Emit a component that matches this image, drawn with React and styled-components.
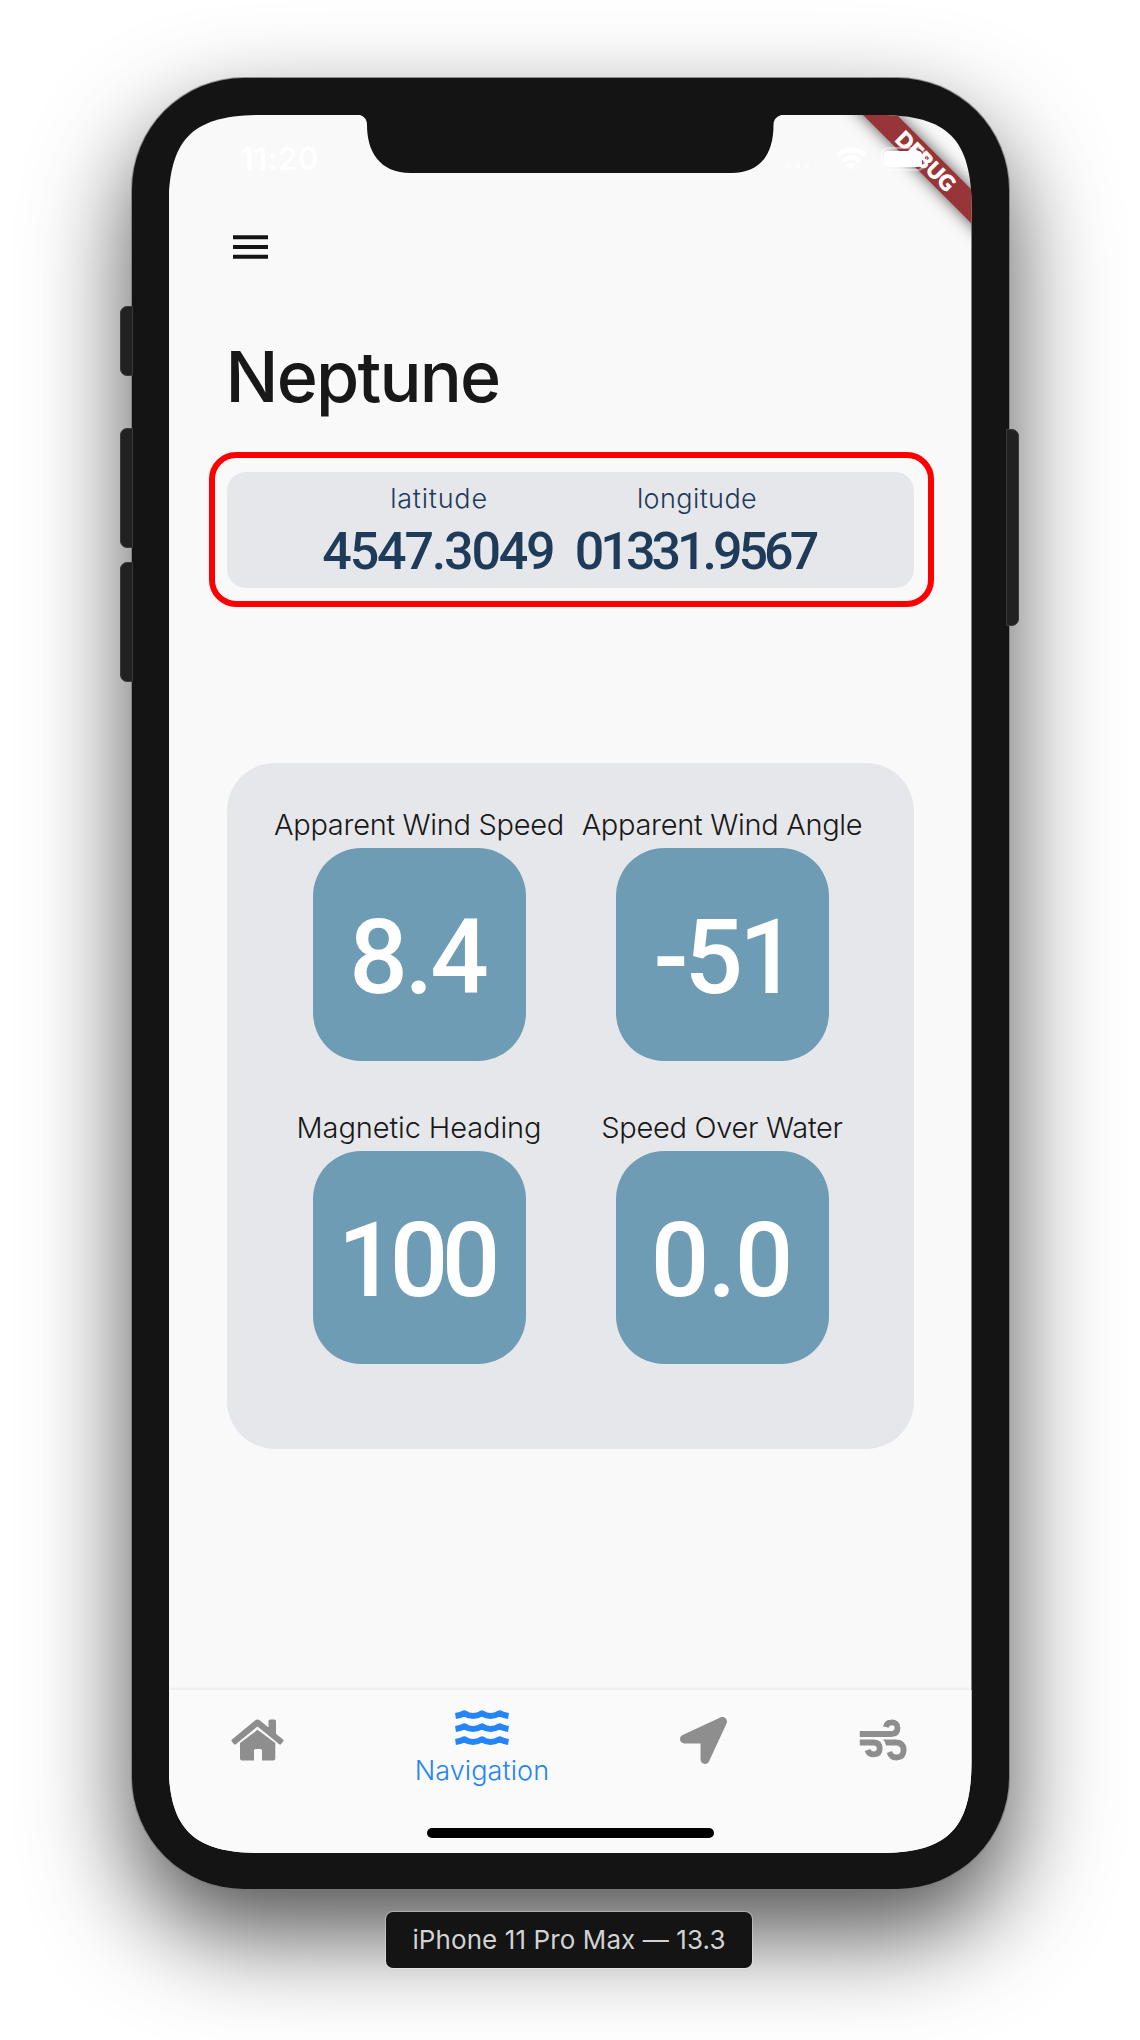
import React from "react";
import styled, { createGlobalStyle } from "styled-components";
import { FaLocationArrow } from "react-icons/fa";

const GlobalStyle = createGlobalStyle`
  * { box-sizing: border-box; }
  body { margin: 0; background: #fff; }
`;

const SCREEN_SHAPE =
  "M 0 92 C 0 24 24 0 92 0 H 711 C 779 0 803 24 803 92 V 1646 C 803 1714 779 1738 711 1738 H 92 C 24 1738 0 1714 0 1646 Z";

const Page = styled.main`
  width: 1140px;
  height: 2040px;
  padding-top: 78px;
  overflow: hidden;
  display: flex;
  flex-direction: column;
  align-items: center;
  font-family: Inter, "Open Sans", sans-serif;
  color: #181818;
`;

const Phone = styled.div`
  position: relative;
  width: 877px;
  height: 1811px;
  padding: 37px;
  border-radius: 112px;
  background: #141414;
  box-shadow: 0 0 0 1px rgba(120, 120, 120, 0.8), 0 44px 100px rgba(0, 0, 0, 0.69);
`;

const SideButton = styled.span`
  position: absolute;
  top: ${(p) => p.$top}px;
  ${(p) => p.$side}: ${(p) => (p.$side === "left" ? -12 : -10)}px;
  width: 13px;
  height: ${(p) => p.$height}px;
  border-radius: ${(p) => (p.$side === "left" ? "7px 0 0 7px" : "0 7px 7px 0")};
  background: #212121;
  border: 1px solid #3a3a3a;
`;

const Screen = styled.div`
  position: relative;
  width: 803px;
  height: 1738px;
  background: #f9f9f9;
  clip-path: path("${SCREEN_SHAPE}");
  display: flex;
  flex-direction: column;
`;

const Notch = styled.svg`
  position: absolute;
  left: 186px;
  top: 0;
`;

const StatusBar = styled.div`
  height: 88px;
  padding: 27px 43px 0 72px;
  display: flex;
  justify-content: space-between;
  align-items: flex-start;
  color: #fff;
`;

const Clock = styled.span`
  font-size: 31px;
  line-height: 34px;
  font-weight: 600;
  letter-spacing: 0.5px;
`;

const StatusIcons = styled.div`
  display: flex;
  gap: 15px;
  padding-top: 5px;
  position: relative;
  z-index: 3;
`;

const Ribbon = styled.div`
  position: absolute;
  z-index: 2;
  top: 34px;
  right: -74px;
  width: 240px;
  height: 24px;
  transform: rotate(45deg);
  background: #983538;
  color: #fff;
  box-shadow: 0 0 16px rgba(0, 0, 0, 0.65);
  font: 900 21px/24px Lato, sans-serif;
  -webkit-text-stroke: 0.7px #fff;
  letter-spacing: 0.4px;
  text-align: center;
`;

const TopBar = styled.div`
  height: 87px;
  padding: 32px 0 0 64px;
`;

const MenuIcon = styled.svg`
  display: block;
`;

const Title = styled.h1`
  margin: 0;
  height: 162px;
  padding: 44px 0 0 57px;
  font-size: 70px;
  line-height: 85px;
  font-weight: 500;
  letter-spacing: -1.8px;
`;

const Highlight = styled.section`
  width: 725px;
  height: 155px;
  margin-left: 40px;
  padding: 14px 14px 14px 12px;
  border: 6px solid #ff0000;
  border-radius: 27px;
`;

const Position = styled.div`
  height: 116px;
  border-radius: 19px;
  background: #e6e7eb;
  color: #1e3b5a;
  display: flex;
  justify-content: center;
  gap: 22px;
  padding: 9px 0 0 2px;
`;

const Coordinate = styled.div`
  width: ${(p) => p.$width}px;
  display: flex;
  flex-direction: column;
  align-items: center;
  white-space: nowrap;
`;

const CoordinateLabel = styled.span`
  font-size: 27px;
  line-height: 36px;
  font-weight: 300;
  letter-spacing: ${(p) => p.$tracking}px;
`;

const CoordinateValue = styled.span`
  font-family: Roboto, sans-serif;
  font-size: 52px;
  line-height: 70px;
  font-weight: 500;
  letter-spacing: ${(p) => p.$tracking}px;
  padding-right: ${(p) => -p.$tracking}px;
`;

const Instruments = styled.section`
  width: 687px;
  height: 686px;
  margin: 156px 0 0 58px;
  padding: 43px 40px 0 41px;
  border-radius: 48px;
  background: #e6e7eb;
  display: grid;
  grid-template-columns: 303px 303px;
  grid-template-rows: 303px 303px;
`;

const Instrument = styled.div`
  display: flex;
  flex-direction: column;
  align-items: center;
  white-space: nowrap;
`;

const InstrumentName = styled.span`
  font-size: 29px;
  line-height: 38px;
  height: 42px;
  font-weight: 300;
  letter-spacing: ${(p) => p.$tracking}px;
`;

const Tile = styled.div`
  width: 213px;
  height: 213px;
  border-radius: 48px;
  background: #6d9cb4;
  color: #fff;
  display: flex;
  align-items: center;
  justify-content: center;
  padding-top: 6px;
  font-family: Roboto, sans-serif;
  font-size: 103px;
  font-weight: 500;
`;

const Reading = styled.span`
  letter-spacing: ${(p) => p.$tracking}px;
  padding-right: ${(p) => -p.$tracking}px;
  padding-left: ${(p) => p.$indent || 0}px;
`;

const TabBar = styled.nav`
  margin-top: auto;
  height: 163px;
  background: #fafafa;
  box-shadow: 0 -1px 4px rgba(0, 0, 0, 0.08);
  padding: 18px 65px 0 62px;
  display: flex;
  justify-content: space-between;
`;

const Tab = styled.div`
  display: flex;
  flex-direction: column;
  align-items: center;
  height: 84px;
  padding-top: ${(p) => p.$inset}px;
  color: ${(p) => (p.$active ? "#2385f7" : "#8e8e8e")};
`;

const TabLabel = styled.span`
  font-size: 27px;
  line-height: 34px;
  margin-top: 8px;
  font-weight: 300;
  letter-spacing: 0.1px;
`;

const HomeIndicator = styled.span`
  position: absolute;
  left: 258px;
  bottom: 15px;
  width: 287px;
  height: 10px;
  border-radius: 5px;
  background: #000;
`;

const Caption = styled.div`
  position: relative;
  margin: 23px 2px 0 0;
  width: 366px;
  height: 56px;
  border-radius: 7px;
  background: #141414;
  box-shadow: 0 0 0 1px rgba(255, 255, 255, 0.3);
  color: #d2d2d2;
  font-size: 26px;
  line-height: 56px;
  letter-spacing: 0.1px;
  text-align: center;
  white-space: nowrap;
`;

const coordinates = [
  { label: "latitude", value: "4547.3049", width: 230, labelTracking: 0.8, tracking: -2.2 },
  { label: "longitude", value: "01331.9567", width: 242, labelTracking: 0.4, tracking: -4 },
];

const instruments = [
  { name: "Apparent Wind Speed", value: "8.4", nameTracking: -0.3, tracking: -3 },
  { name: "Apparent Wind Angle", value: "-51", nameTracking: -0.3, tracking: -4, indent: 7 },
  { name: "Magnetic Heading", value: "100", nameTracking: -0.1, tracking: -6.500 },
  { name: "Speed Over Water", value: "0.0", nameTracking: -0.3, tracking: -1.5 },
];

function SignalDots() {
  return (
    <svg width="36" height="23" viewBox="0 0 36 23" fill="#fff" fillOpacity=".5">
      <circle cx="4" cy="19" r="2" />
      <circle cx="13" cy="19" r="2" />
      <circle cx="22" cy="19" r="2" />
      <circle cx="31" cy="19" r="2" />
    </svg>
  );
}

function WifiIcon() {
  return (
    <svg width="30" height="23" viewBox="0 0 30 23" fill="none" stroke="#fff" strokeWidth="4.8">
      <path d="M1.500 8.500C9 .8 21 .8 28.500 8.500M6.800 14C11.400 9.500 18.600 9.500 23.200 14" />
      <path d="M10 17.800c3-2.500 7-2.500 10 0l-5 5.200z" fill="#fff" stroke="none" />
    </svg>
  );
}

function BatteryIcon() {
  return (
    <svg width="48" height="24" viewBox="0 0 48 24">
      <rect x="1" y="1" width="42" height="22" rx="6" fill="none" stroke="#fff" strokeOpacity=".4" strokeWidth="2" />
      <rect x="3" y="4" width="38" height="16" rx="4" fill="#fff" />
      <path d="M45 8q3 4 0 8z" fill="#fff" fillOpacity=".5" />
    </svg>
  );
}

function HomeIcon() {
  return (
    <svg width="53" height="42" viewBox="0 0 53 42" fill="currentColor">
      <path d="M9 24 26.500 10.800 44.300 24v15.500q0 2-2 2H31V31.500q0-1.500-1.500-1.500h-5q-1.500 0-1.500 1.500v10H11q-2 0-2-2z" />
      <path d="M1 20.500 24 1.600q2.500-2 5 0l8.500 7V2q0-1.500 1.500-1.500h4.500Q45 .5 45 2v12.800l7 5.700q1 1 .2 2l-2 2.500q-1 1-2 .2L26.500 7.500 4.800 25.200q-1 .8-2-.2l-2-2.500q-.8-1 .2-2z" />
    </svg>
  );
}

function WavesIcon() {
  const wave = "M.5 6Q6 5.200 9.500 3.200 13.500 6 18 6T27 3.200Q31 6 35.500 6T44.500 3.200Q48 5.200 53.500 6";
  return (
    <svg width="54" height="36" viewBox="0 0 54 36" fill="none" stroke="currentColor" strokeWidth="6" strokeLinejoin="round">
      <path d={wave} />
      <path d={wave} transform="translate(0 13)" />
      <path d={wave} transform="translate(0 26)" />
    </svg>
  );
}

function WindIcon() {
  return (
    <svg width="48" height="42" viewBox="0 0 48 42" fill="none" stroke="currentColor" strokeWidth="5.800" strokeLinejoin="round">
      <path d="M.8 15H32Q38.500 15 38.500 9T32 3.500Q28 3.500 26.800 8" />
      <path d="M.8 23.500H15Q20.700 24 20.700 29.500T15 35.300Q10 35.500 8.500 31" />
      <path d="M24 20.600H37Q47.500 21 47.500 31T37.500 41.400Q30 41.400 27.800 34L33 32Q34 35.600 37.500 35.600 41.700 35.500 41.700 31T37 26.400H27Q26.500 23 24 20.600Z" fill="currentColor" stroke="none" />
    </svg>
  );
}

export default function App() {
  return (
    <Page>
      <GlobalStyle />
      <Phone>
        <SideButton $side="left" $top={228} $height={70} />
        <SideButton $side="left" $top={350} $height={120} />
        <SideButton $side="left" $top={484} $height={120} />
        <SideButton $side="right" $top={351} $height={197} />
        <Screen>
          <Notch width="432" height="60" viewBox="0 0 432 60" fill="#141414">
            <path d="M0-1Q12 0 12 10C12 36 24 58 56 58H376C408 58 418.500 36 418.500 10Q418.500 0 432-1Z" />
          </Notch>
          <Ribbon>DEBUG</Ribbon>
          <StatusBar>
            <Clock>11:20</Clock>
            <StatusIcons>
              <SignalDots />
              <WifiIcon />
              <BatteryIcon />
            </StatusIcons>
          </StatusBar>
          <TopBar>
            <MenuIcon width="35" height="25" viewBox="0 0 35 25" stroke="#141414" strokeWidth="4">
              <path d="M0 2.300H35M0 12H35M0 21.700H35" />
            </MenuIcon>
          </TopBar>
          <Title>Neptune</Title>
          <Highlight>
            <Position>
              {coordinates.map((c) => (
                <Coordinate key={c.label} $width={c.width}>
                  <CoordinateLabel $tracking={c.labelTracking}>{c.label}</CoordinateLabel>
                  <CoordinateValue $tracking={c.tracking}>{c.value}</CoordinateValue>
                </Coordinate>
              ))}
            </Position>
          </Highlight>
          <Instruments>
            {instruments.map((i) => (
              <Instrument key={i.name}>
                <InstrumentName $tracking={i.nameTracking}>{i.name}</InstrumentName>
                <Tile>
                  <Reading $tracking={i.tracking} $indent={i.indent}>
                    {i.value}
                  </Reading>
                </Tile>
              </Instrument>
            ))}
          </Instruments>
          <TabBar>
            <Tab $inset={11}>
              <HomeIcon />
            </Tab>
            <Tab $inset={2} $active>
              <WavesIcon />
              <TabLabel>Navigation</TabLabel>
            </Tab>
            <Tab $inset={9}>
              <FaLocationArrow size={47} />
            </Tab>
            <Tab $inset={11}>
              <WindIcon />
            </Tab>
          </TabBar>
          <HomeIndicator />
        </Screen>
      </Phone>
      <Caption>iPhone 11 Pro Max — 13.3</Caption>
    </Page>
  );
}
